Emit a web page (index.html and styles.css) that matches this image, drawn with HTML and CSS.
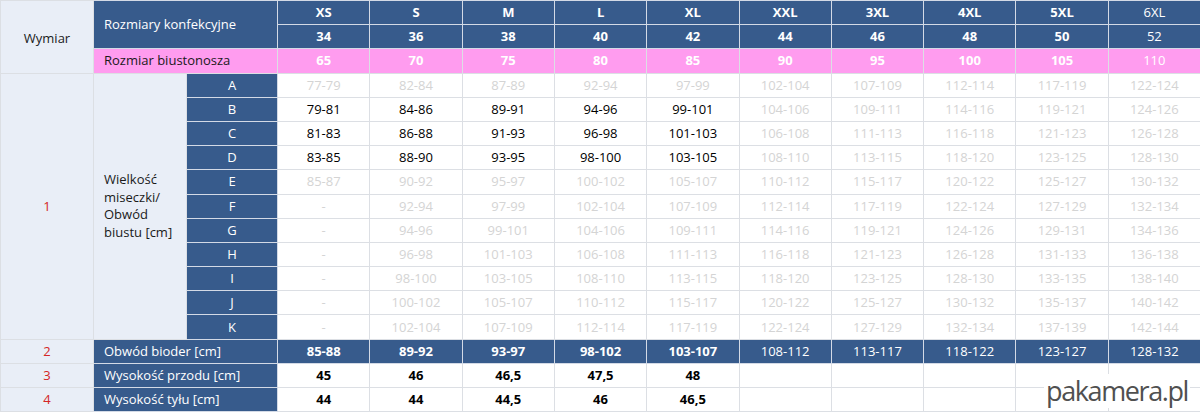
FILE: index.html
```html
<!DOCTYPE html>
<html lang="pl">
<head>
<meta charset="utf-8">
<title>Tabela rozmiarów</title>
<link rel="stylesheet" href="styles.css">
</head>
<body>
<div class="wrap">
<table class="sizes">
<colgroup>
<col class="c-dim"><col class="c-lab"><col class="c-let">
<col class="c-s"><col class="c-s"><col class="c-s"><col class="c-s"><col class="c-s">
<col class="c-s"><col class="c-s"><col class="c-s"><col class="c-s"><col class="c-s">
</colgroup>
<tbody>
<tr>
<td class="dim" rowspan="3">Wymiar</td>
<td class="lbl" colspan="2" rowspan="2">Rozmiary konfekcyjne</td>
<td class="hd">XS</td><td class="hd">S</td><td class="hd">M</td><td class="hd">L</td><td class="hd">XL</td>
<td class="hd">XXL</td><td class="hd">3XL</td><td class="hd">4XL</td><td class="hd">5XL</td><td class="hd n">6XL</td>
</tr>
<tr>
<td class="hd">34</td><td class="hd">36</td><td class="hd">38</td><td class="hd">40</td><td class="hd">42</td>
<td class="hd">44</td><td class="hd">46</td><td class="hd">48</td><td class="hd">50</td><td class="hd n">52</td>
</tr>
<tr>
<td class="pkl" colspan="2">Rozmiar biustonosza</td>
<td class="pk">65</td><td class="pk">70</td><td class="pk">75</td><td class="pk">80</td><td class="pk">85</td>
<td class="pk">90</td><td class="pk">95</td><td class="pk">100</td><td class="pk">105</td><td class="pk n">110</td>
</tr>
<tr>
<td class="dim red" rowspan="11">1</td>
<td class="cup" rowspan="11">Wielkość<br>miseczki/<br>Obwód<br>biustu [cm]</td>
<td class="let">A</td>
<td class="v lt">77-79</td><td class="v lt">82-84</td><td class="v lt">87-89</td><td class="v lt">92-94</td><td class="v lt">97-99</td>
<td class="v lt">102-104</td><td class="v lt">107-109</td><td class="v lt">112-114</td><td class="v lt">117-119</td><td class="v lt">122-124</td>
</tr>
<tr>
<td class="let">B</td>
<td class="v">79-81</td><td class="v">84-86</td><td class="v">89-91</td><td class="v">94-96</td><td class="v">99-101</td>
<td class="v lt">104-106</td><td class="v lt">109-111</td><td class="v lt">114-116</td><td class="v lt">119-121</td><td class="v lt">124-126</td>
</tr>
<tr>
<td class="let">C</td>
<td class="v">81-83</td><td class="v">86-88</td><td class="v">91-93</td><td class="v">96-98</td><td class="v">101-103</td>
<td class="v lt">106-108</td><td class="v lt">111-113</td><td class="v lt">116-118</td><td class="v lt">121-123</td><td class="v lt">126-128</td>
</tr>
<tr>
<td class="let">D</td>
<td class="v">83-85</td><td class="v">88-90</td><td class="v">93-95</td><td class="v">98-100</td><td class="v">103-105</td>
<td class="v lt">108-110</td><td class="v lt">113-115</td><td class="v lt">118-120</td><td class="v lt">123-125</td><td class="v lt">128-130</td>
</tr>
<tr>
<td class="let">E</td>
<td class="v lt">85-87</td><td class="v lt">90-92</td><td class="v lt">95-97</td><td class="v lt">100-102</td><td class="v lt">105-107</td>
<td class="v lt">110-112</td><td class="v lt">115-117</td><td class="v lt">120-122</td><td class="v lt">125-127</td><td class="v lt">130-132</td>
</tr>
<tr>
<td class="let">F</td>
<td class="v lt">-</td><td class="v lt">92-94</td><td class="v lt">97-99</td><td class="v lt">102-104</td><td class="v lt">107-109</td>
<td class="v lt">112-114</td><td class="v lt">117-119</td><td class="v lt">122-124</td><td class="v lt">127-129</td><td class="v lt">132-134</td>
</tr>
<tr>
<td class="let">G</td>
<td class="v lt">-</td><td class="v lt">94-96</td><td class="v lt">99-101</td><td class="v lt">104-106</td><td class="v lt">109-111</td>
<td class="v lt">114-116</td><td class="v lt">119-121</td><td class="v lt">124-126</td><td class="v lt">129-131</td><td class="v lt">134-136</td>
</tr>
<tr>
<td class="let">H</td>
<td class="v lt">-</td><td class="v lt">96-98</td><td class="v lt">101-103</td><td class="v lt">106-108</td><td class="v lt">111-113</td>
<td class="v lt">116-118</td><td class="v lt">121-123</td><td class="v lt">126-128</td><td class="v lt">131-133</td><td class="v lt">136-138</td>
</tr>
<tr>
<td class="let">I</td>
<td class="v lt">-</td><td class="v lt">98-100</td><td class="v lt">103-105</td><td class="v lt">108-110</td><td class="v lt">113-115</td>
<td class="v lt">118-120</td><td class="v lt">123-125</td><td class="v lt">128-130</td><td class="v lt">133-135</td><td class="v lt">138-140</td>
</tr>
<tr>
<td class="let">J</td>
<td class="v lt">-</td><td class="v lt">100-102</td><td class="v lt">105-107</td><td class="v lt">110-112</td><td class="v lt">115-117</td>
<td class="v lt">120-122</td><td class="v lt">125-127</td><td class="v lt">130-132</td><td class="v lt">135-137</td><td class="v lt">140-142</td>
</tr>
<tr>
<td class="let">K</td>
<td class="v lt">-</td><td class="v lt">102-104</td><td class="v lt">107-109</td><td class="v lt">112-114</td><td class="v lt">117-119</td>
<td class="v lt">122-124</td><td class="v lt">127-129</td><td class="v lt">132-134</td><td class="v lt">137-139</td><td class="v lt">142-144</td>
</tr>
<tr>
<td class="dim red">2</td>
<td class="lbl" colspan="2">Obwód bioder [cm]</td>
<td class="hd">85-88</td><td class="hd">89-92</td><td class="hd">93-97</td><td class="hd">98-102</td><td class="hd">103-107</td>
<td class="hd n">108-112</td><td class="hd n">113-117</td><td class="hd n">118-122</td><td class="hd n">123-127</td><td class="hd n">128-132</td>
</tr>
<tr>
<td class="dim red">3</td>
<td class="lbl" colspan="2">Wysokość przodu [cm]</td>
<td class="v b">45</td><td class="v b">46</td><td class="v b">46,5</td><td class="v b">47,5</td><td class="v b">48</td>
<td class="v"></td><td class="v"></td><td class="v"></td><td class="v"></td><td class="v"></td>
</tr>
<tr>
<td class="dim red">4</td>
<td class="lbl" colspan="2">Wysokość tyłu [cm]</td>
<td class="v b">44</td><td class="v b">44</td><td class="v b">44,5</td><td class="v b">46</td><td class="v b">46,5</td>
<td class="v"></td><td class="v"></td><td class="v"></td><td class="v"></td><td class="v"></td>
</tr>
</tbody>
</table>
<div class="mark">pakamera.pl</div>
</div>
</body>
</html>
```

FILE: styles.css
```css
html, body {
  margin: 0;
  padding: 0;
  background: #ffffff;
}

.wrap {
  position: relative;
  width: 1200px;
}

.sizes {
  width: 1200px;
  table-layout: fixed;
  border-collapse: collapse;
  font-family: "Open Sans", "Noto Sans", sans-serif;
  font-size: 13px;
  color: #000000;
}

.c-dim { width: 93px; }
.c-lab { width: 93px; }
.c-let { width: 91px; }
.c-s { width: 92.3px; }

.sizes tr {
  height: 24.2px;
}

.sizes td {
  border: 1px solid #dcdfe4;
  padding: 0;
  text-align: center;
  vertical-align: middle;
  line-height: 17px;
  white-space: nowrap;
}

.dim {
  background: #e9eef7;
  color: #1a1a1a;
}

.dim:first-child[rowspan="3"] {
  padding-top: 4px;
}

.red {
  color: #d42626;
}

.lbl {
  background: #375b8c;
  color: #ffffff;
  text-align: left !important;
  padding-left: 10px !important;
  border-color: #d3dae6 !important;
}

.hd {
  background: #375b8c;
  color: #ffffff;
  font-weight: 700;
  border-color: #d3dae6 !important;
}

.pkl {
  background: #ff9cef;
  color: #1a1a1a;
  text-align: left !important;
  padding-left: 10px !important;
}

.pk {
  background: #ff9cef;
  color: #ffffff;
  font-weight: 700;
}

.n {
  font-weight: 400;
}

.cup {
  background: #e9eef7;
  text-align: left !important;
  padding-left: 10px !important;
  color: #1a1a1a;
  line-height: 17.5px !important;
}

.let {
  background: #375b8c;
  color: #ffffff;
  border-color: #d3dae6 !important;
}

.v {
  background: #ffffff;
  color: #000000;
}

.lt {
  color: #d4d4d4;
}

.b {
  font-weight: 700;
}

.mark {
  position: absolute;
  right: 10px;
  top: 374px;
  padding: 0 2px;
  background: #ffffff;
  font-family: "Open Sans", "Noto Sans", sans-serif;
  font-size: 27px;
  line-height: 34px;
  letter-spacing: -1.4px;
  color: #505050;
}
```
